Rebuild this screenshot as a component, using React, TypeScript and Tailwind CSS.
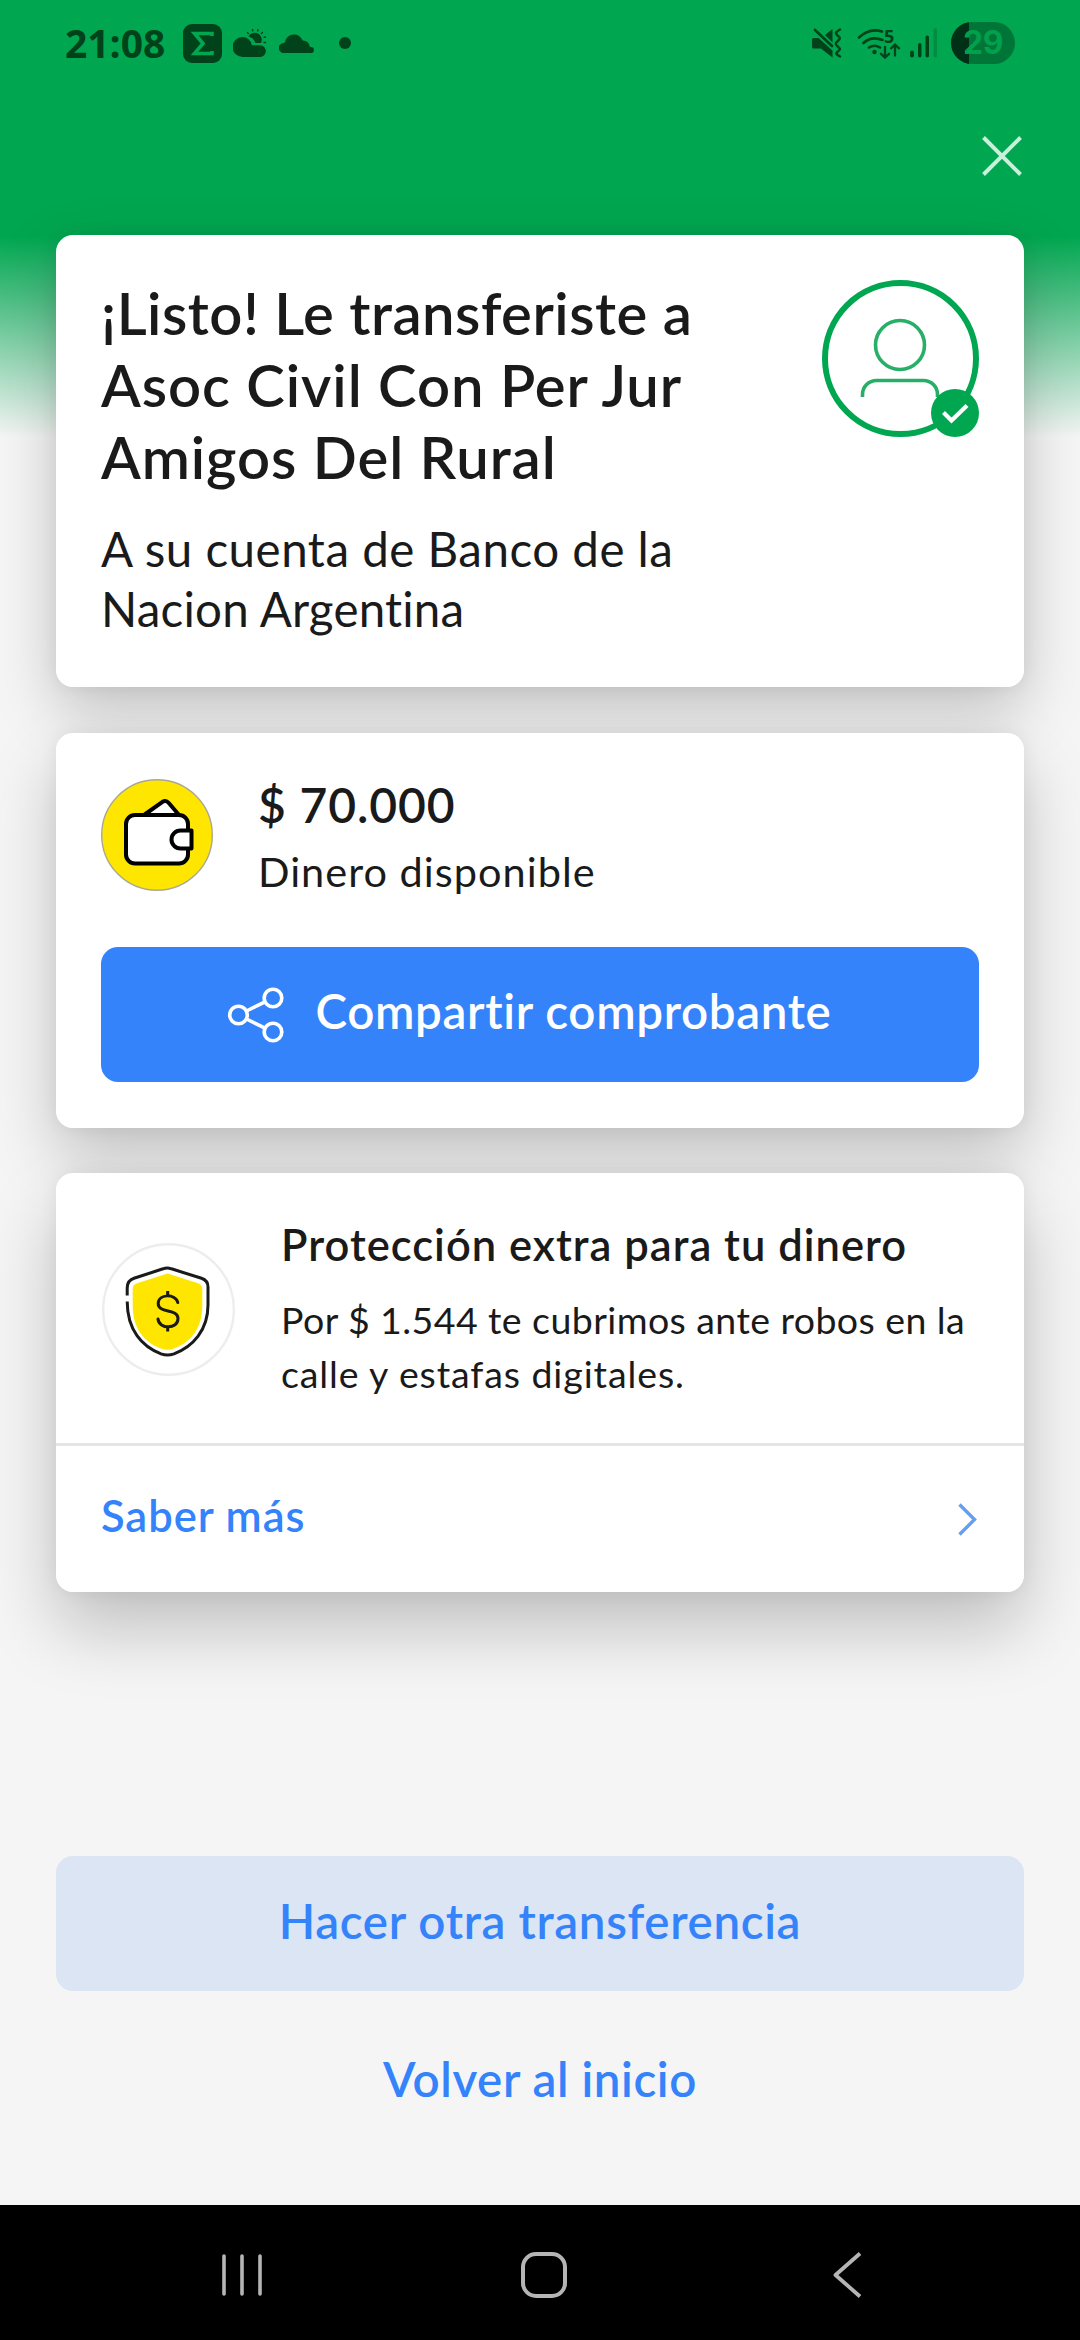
import type { ReactNode } from 'react';

function Card({ className, children }: { className: string; children: ReactNode }) {
  return (
    <section
      className={`relative rounded-[17px] bg-white before:absolute before:inset-0 before:-z-10 before:rounded-[17px] before:content-[''] ${className}`}
    >
      {children}
    </section>
  );
}

function StatusBar() {
  return (
    <div className="flex h-[86px] items-center pr-[65px] pl-[65px] text-[#004219]">
      <span className="w-[118px] pb-0.5 font-['Open_Sans',sans-serif] text-[39px] leading-none font-bold">21:08</span>

      <svg className="h-[39px] w-[39px]" viewBox="0 0 39 39">
        <rect width="39" height="39" rx="9" fill="currentColor" />
        <path d="M29 12V9.500H11.500L20 19.500L11.500 29.500H29V27" fill="none" stroke="#00a650" strokeWidth="3.600" />
      </svg>

      <svg className="ml-[11px] h-[28px] w-[33px]" viewBox="0 0 33 28" fill="currentColor">
        <path d="M15.500 7.500a7 7 0 1 1 12.500 6.500h-5.500a10 10 0 0 0-7-6.500z" />
        <path d="M14.500 3.500l.8 1.200M19.500.500l.3 1.500M25 .500l-.3 1.500M29.500 3.500l-1.200 1M32.500 8l-1.500.3M32.500 13.500l-1.500-.2" stroke="currentColor" strokeWidth="1.300" strokeLinecap="round" />
        <path d="M9.500 8a9.500 9.500 0 0 1 9.300 8.200H27a5.900 5.900 0 0 1 0 11.800H9.500a10 10 0 0 1 0-20z" />
      </svg>

      <svg className="ml-[13px] h-[20px] w-[35px]" viewBox="0 0 35 20" fill="currentColor">
        <path d="M5 20a5 5 0 0 1-.500-10C6 9.600 6 9 6.500 7.500a9 9 0 0 1 16.500-1c.600.900 1 1.200 2 1.300a6.300 6.300 0 0 1 5.500 5c.200.800.400 1 1.200 1.200A3 3 0 0 1 32 20z" />
      </svg>

      <span className="ml-[25px] h-3 w-3 rounded-full bg-[#004219]" />

      <div className="ml-auto flex items-center">
        <svg className="h-[30px] w-[30px]" viewBox="0 0 30 30">
          <path d="M0 11.500Q0 10 1.500 10H6.500L20.500 22.500V29.500L9 20.500H1.500Q0 20.500 0 19z" fill="currentColor" />
          <path d="M20.500 1V14.500L13 7z" fill="currentColor" />
          <path d="M3 2L20 18" stroke="currentColor" strokeWidth="2.600" strokeLinecap="round" />
          <path d="M28 1.500C23 4.500 23 5 25.800 7.800C28.500 10 28.500 10.500 25.800 13C23 15.500 23 16 25.800 18.500C28.500 21 28.500 21.500 25.800 23.500C23.500 25.500 23.500 26 28 28.500" fill="none" stroke="currentColor" strokeWidth="2.400" strokeLinecap="round" />
        </svg>

        <div className="relative ml-[15px] h-[31px] w-[44px]">
          <svg className="h-[31px] w-[44px]" viewBox="0 0 44 31" fill="none" stroke="currentColor" strokeLinecap="round">
            <path d="M2 9.500Q12.500-.500 25 3.500M6.500 15Q14.500 7.500 25.500 12M12 19.500q5.500-3.500 11 0" strokeWidth="2.600" />
            <circle cx="17.500" cy="24" r="2.200" fill="currentColor" stroke="none" />
            <path d="M28 19V29.500M24 25.800l4 3.800l4-3.800M38 27.500V16.500M34 20.300l4-3.800l4 3.800" strokeWidth="2.300" />
          </svg>
          <span className="absolute -top-[1px] left-[27px] font-['Open_Sans',sans-serif] text-[18px] leading-[18px] font-bold">5</span>
        </div>

        <svg className="ml-[9px] h-[30px] w-[27px]" viewBox="0 0 27 30" fill="currentColor">
          <rect x="0" y="22.500" width="4" height="7" rx="2" />
          <rect x="8" y="15" width="3.500" height="14.500" rx="1.700" />
          <rect x="15.500" y="7.500" width="3.500" height="22" rx="1.700" />
          <rect x="23.500" y="0" width="3.500" height="29.500" rx="1.700" opacity=".25" />
        </svg>

        <div className="relative ml-[14px] flex h-[42px] w-[64px] items-center justify-center overflow-hidden rounded-full bg-[#007538]">
          <span className="absolute inset-y-0 left-0 w-[18px] bg-[#003015]" />
          <span className="relative font-['Inter',sans-serif] text-[32px] leading-none font-bold tracking-[-0.5px] text-[#00a04c]">29</span>
        </div>
      </div>
    </div>
  );
}

function Avatar() {
  return (
    <svg className="h-[157px] w-[157px]" viewBox="0 0 157 157" fill="none">
      <circle cx="78.500" cy="78.500" r="75.500" stroke="#00a650" strokeWidth="6" />
      <circle cx="78" cy="65" r="24.500" stroke="#27ae67" strokeWidth="3.600" />
      <path d="M40.500 117V114.500A14 14 0 0 1 54.500 100.500H101.500A14 14 0 0 1 115.500 114.500V117" stroke="#27ae67" strokeWidth="3.600" />
      <circle cx="133" cy="133" r="24" fill="#00a650" />
      <path d="M121.500 132.500L129.500 140.500L145 125.500" stroke="#fff" strokeWidth="4.200" />
    </svg>
  );
}

function WalletIcon() {
  return (
    <svg className="h-[112px] w-[112px]" viewBox="0 0 112 112" stroke="#000" strokeWidth="4" strokeLinejoin="round">
      <circle cx="56" cy="56" r="55.300" fill="#ffe600" stroke="#a9a894" strokeWidth="1.400" />
      <path d="M43 36L61.500 22.800Q65 20.800 67.800 24L78 36z" fill="#fff" />
      <rect x="25" y="36" width="62" height="48.500" rx="9" fill="#fff" />
      <path d="M90.500 51.500H79.500A9 9 0 0 0 79.500 69.500H90.500z" fill="#fff" />
    </svg>
  );
}

function ShareIcon() {
  return (
    <svg className="h-[58px] w-[58px]" viewBox="0 0 58 58" fill="none" stroke="#fff" strokeWidth="3.600">
      <circle cx="46" cy="12" r="8.800" />
      <circle cx="46" cy="46" r="8.800" />
      <circle cx="11.500" cy="29" r="8.800" />
      <path d="M19.500 25L38 15.800M19.500 33L38 42.200" />
    </svg>
  );
}

function ShieldIcon() {
  return (
    <svg className="h-[133px] w-[133px] shrink-0" viewBox="0 0 133 133" fill="none">
      <circle cx="66.500" cy="66.500" r="65.300" stroke="#ededed" strokeWidth="2.400" />
      <path d="M65.700 30.500L96 40.300Q100.300 41.800 100.300 46V62C100.300 86 89 99 72 105.500Q65.500 108 59 105.500C42 99 30.700 86 30.700 62V46Q30.700 41.800 35 40.300z" fill="#ffe600" />
      <path
        d="M25.200 52.500V45Q25.200 37.500 32 35.300L61 25.800Q65 24.200 69.500 25.800L99.500 35.300Q106 37.500 106 44V62C106 87 91 103.500 72 110.800Q65.500 113 59 110.800C40 103.500 25.200 87 25.200 58.500"
        stroke="#1a1a1a"
        strokeWidth="3"
      />
      <g stroke="#1a1a1a" strokeWidth="3" strokeLinecap="butt">
        <path d="M65.700 48V53.500M65.700 83V88.500" />
        <path
          d="M75.800 59.500C73.800 50.500 56.200 50.500 56.200 60.500C56.200 71 76 65 76 75.500C76 86.500 57 86.500 56 76"
          strokeLinecap="round"
        />
      </g>
    </svg>
  );
}

function NavBar() {
  return (
    <nav className="flex h-[135px] items-center bg-black pt-[5px] pl-[222px]">
      <svg className="h-[42px] w-[40px]" viewBox="0 0 40 42" stroke="#b5b5b5" strokeWidth="3.600" strokeLinecap="round">
        <path d="M2 2V40M20 2V40M38 2V40" />
      </svg>
      <svg className="ml-[259px] h-[46px] w-[46px]" viewBox="0 0 46 46" fill="none" stroke="#b5b5b5" strokeWidth="4">
        <rect x="2" y="2" width="42" height="42" rx="13" />
      </svg>
      <svg className="ml-[265px] h-[46px] w-[30px]" viewBox="0 0 30 46" fill="none" stroke="#b5b5b5" strokeWidth="3.800">
        <path d="M28 1.500L3.500 23L28 44.500" strokeLinejoin="round" />
      </svg>
    </nav>
  );
}

export default function App() {
  return (
    <div className="relative isolate flex h-[2340px] w-[1080px] flex-col overflow-hidden bg-[#f5f5f5] bg-[linear-gradient(180deg,#00a650_0px,#00a650_236px,#f5f5f5_437px)] font-['Lato',sans-serif] text-[#1a1a1a]">
      <StatusBar />

      <header className="flex h-[149px] justify-end pt-[50px] pr-[58px]">
        <button aria-label="Cerrar" className="h-[40px] w-[40px]">
          <svg viewBox="0 0 40 40" stroke="#c9f0da" strokeWidth="4">
            <path d="M1.500 1.500L38.500 38.500M38.500 1.500L1.500 38.500" />
          </svg>
        </button>
      </header>

      <main className="flex flex-1 flex-col px-14">
        <Card className="flex h-[452px] justify-between px-[45px] pt-[42px] before:shadow-[0_0_18px_rgba(0,0,0,0.06),0_24px_62px_rgba(0,0,0,0.21)]">
          <div>
            <h1 className="text-[58px] leading-[72px] font-semibold whitespace-nowrap">
              <span className="block tracking-[0.5px]">¡Listo! Le transferiste a</span>
              <span className="block tracking-[0.95px]">Asoc Civil Con Per Jur</span>
              <span className="block tracking-[0.95px]">Amigos Del Rural</span>
            </h1>
            <p className="mt-[26px] text-[47.5px] leading-[60px] whitespace-nowrap">
              <span className="block tracking-[0.5px]">A su cuenta de Banco de la</span>
              <span className="block tracking-[0.2px]">Nacion Argentina</span>
            </p>
          </div>
          <div className="pt-[3px]">
            <Avatar />
          </div>
        </Card>

        <Card className="mt-[46px] h-[395px] px-[45px] pt-[42px] before:shadow-[0_0_18px_rgba(0,0,0,0.06),0_30px_66px_rgba(0,0,0,0.21)]">
          <div className="flex h-[172px]">
            <div className="pt-1">
              <WalletIcon />
            </div>
            <div className="ml-[45px]">
              <p className="text-[48px] leading-[60px] font-semibold tracking-[0.9px]">$ 70.000</p>
              <p className="mt-[11px] text-[41.5px] leading-[50px] tracking-[1px]">Dinero disponible</p>
            </div>
          </div>
          <button className="flex h-[135px] w-full items-center justify-center gap-[31px] rounded-[17px] bg-[#3483fa] pr-[22px] text-white">
            <ShareIcon />
            <span className="pb-2 text-[47.5px] leading-none font-semibold tracking-[0.65px]">Compartir comprobante</span>
          </button>
        </Card>

        <Card className="mt-[45px] h-[419px] before:shadow-[0_0_18px_rgba(0,0,0,0.06),0_36px_70px_rgba(0,0,0,0.22)]">
          <div className="flex h-[270px] items-start pt-[44px] pl-[46px]">
            <div className="pt-[26px]">
              <ShieldIcon />
            </div>
            <div className="ml-[46px] whitespace-nowrap">
              <h2 className="text-[43.5px] leading-[54px] font-semibold tracking-[1px]">Protección extra para tu dinero</h2>
              <p className="mt-[22px] text-[37.5px] leading-[54px]">
                <span className="block tracking-[0.42px]">Por $ 1.544 te cubrimos ante robos en la</span>
                <span className="block tracking-[0.9px]">calle y estafas digitales.</span>
              </p>
            </div>
          </div>
          <a className="flex h-[149px] items-center justify-between border-t-[3px] border-[#e5e5e5] pr-[47px] pl-[45px] text-[#3483fa]">
            <span className="pb-1.5 text-[43.5px] leading-none font-semibold tracking-[0.95px]">Saber más</span>
            <svg className="h-[33px] w-[19px]" viewBox="0 0 19 33" fill="none" stroke="#659ff0" strokeWidth="3.400">
              <path d="M1.500 1.500L16.500 16.500L1.500 31.500" />
            </svg>
          </a>
        </Card>

        <button className="mt-[264px] flex h-[135px] items-center justify-center rounded-[17px] bg-[#dbe5f4] text-[#3483fa]">
          <span className="pb-1.5 text-[47.5px] leading-none font-semibold tracking-[0.65px]">Hacer otra transferencia</span>
        </button>
        <button className="mt-[23px] flex h-[135px] items-center justify-center text-[#3483fa]">
          <span className="pb-1.5 text-[47.5px] leading-none font-semibold tracking-[0.6px]">Volver al inicio</span>
        </button>
      </main>

      <NavBar />
    </div>
  );
}
